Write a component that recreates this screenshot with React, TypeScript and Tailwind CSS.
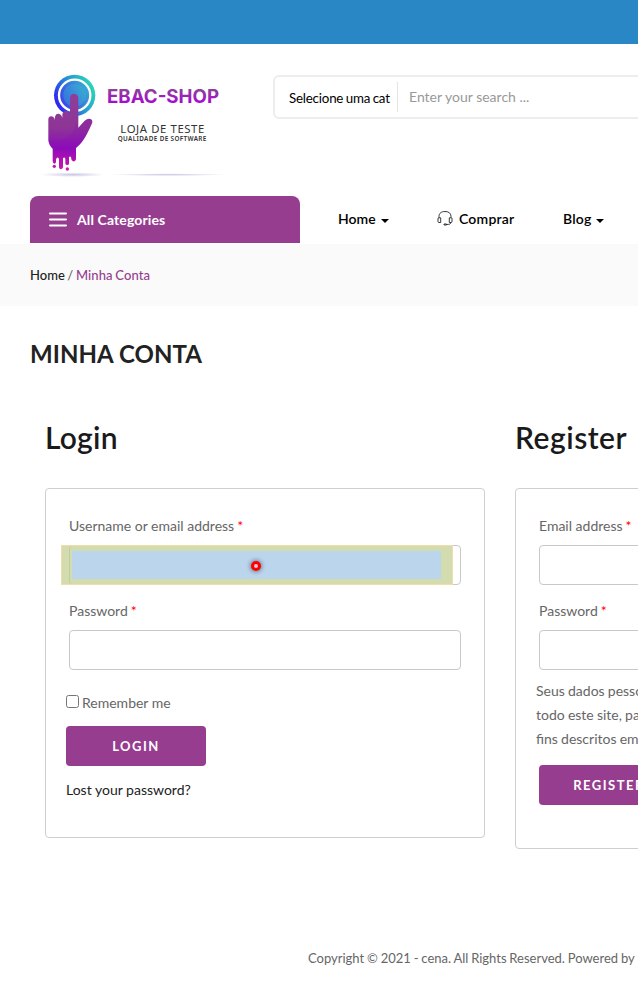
import type { ReactNode } from "react";

function Logo() {
  return (
    <svg className="block h-[130px] w-[210px] shrink-0" viewBox="0 0 630 390">
      <defs>
        <linearGradient id="ring" x1="0" y1="0.75" x2="1" y2="0.25">
          <stop offset="0" stopColor="#3410f5" />
          <stop offset="0.5" stopColor="#2590d8" />
          <stop offset="1" stopColor="#2adfb0" />
        </linearGradient>
        <linearGradient id="disc" x1="0" y1="0.8" x2="1" y2="0.2">
          <stop offset="0" stopColor="#3a3ce8" />
          <stop offset="1" stopColor="#38b4cf" />
        </linearGradient>
        <linearGradient id="hand" gradientUnits="userSpaceOnUse" x1="0" y1="100" x2="0" y2="330">
          <stop offset="0" stopColor="#8e3f9a" />
          <stop offset="0.45" stopColor="#8e3496" />
          <stop offset="0.72" stopColor="#8c0cba" />
          <stop offset="1" stopColor="#d414a8" />
        </linearGradient>
        <linearGradient id="word" gradientUnits="userSpaceOnUse" x1="0" y1="88" x2="0" y2="130">
          <stop offset="0" stopColor="#90409a" />
          <stop offset="1" stopColor="#a30ad2" />
        </linearGradient>
        <radialGradient id="shade">
          <stop offset="0" stopColor="#c9c6e4" />
          <stop offset="1" stopColor="#c9c6e4" stopOpacity="0" />
        </radialGradient>
      </defs>
      <ellipse cx="128" cy="344" rx="96" ry="7" fill="url(#shade)" />
      <ellipse cx="415" cy="344" rx="178" ry="4" fill="url(#shade)" />
      <circle cx="134" cy="106" r="62" fill="url(#ring)" />
      <circle cx="134" cy="106" r="47" fill="url(#disc)" stroke="#fff" strokeWidth="7" />
      <circle cx="134" cy="106" r="34" fill="#39c5d5" opacity="0.3" />
      <path
        fill="url(#hand)"
        d="M55 240V178Q55 169 64 169Q72 169 75 180V171Q77 160 86 161Q94 162 97 173V163Q100 153 109 153Q118 154 120 164V114Q121 101 132 101Q144 102 145 114V203Q153 195 160 187Q168 176 178 176Q190 178 186 190Q180 204 172 220Q157 250 138 264V298Q136 306 129 304Q123 302 123 292V291Q119 287 117 292V311Q116 315 112 315Q107 315 106 311V296Q103 289 99 295V322Q97 328 92 328Q87 327 87 321V298Q85 290 80 294Q77 297 78 306Q77 311 73 311Q68 310 68 304V266Q56 255 55 240Z"
      />
      <path d="M55 240Q95 248 120 226Q136 211 137 184L145 205Q152 196 160 187Q168 176 178 176Q190 178 186 190Q168 230 157 244Q132 276 68 266Q56 255 55 240Z" fill="#8c0cba" opacity="0.2" />
      <circle cx="73" cy="319" r="5" fill="#bd18b4" />
      <circle cx="112" cy="327" r="5" fill="#d414a8" />
      <text x="231" y="129" fontFamily="Inter, sans-serif" fontWeight="700" fontSize="56" textLength="336" lengthAdjust="spacingAndGlyphs" fill="url(#word)">EBAC-SHOP</text>
      <text x="271" y="219" fontFamily="'Noto Sans', sans-serif" fontSize="34" textLength="252" fill="#333">LOJA DE TESTE</text>
      <text x="263" y="242" fontFamily="'Noto Sans', sans-serif" fontWeight="600" fontSize="19" textLength="266" fill="#333">QUALIDADE DE SOFTWARE</text>
    </svg>
  );
}

function Caret() {
  return (
    <svg className="mt-[5px] h-1 w-2" viewBox="0 0 8 4">
      <path d="M0 0H8L4 4Z" fill="#000" />
    </svg>
  );
}

function Headset() {
  return (
    <svg className="mb-[2px] mr-[6px] h-4 w-4" viewBox="0 0 16 16" fill="none" stroke="#222" strokeWidth="0.9">
      <path d="M2 7.8V6.5C2 3 4.5 1.5 8 1.5S14 3 14 6.5V7.8M13.8 12.5C13.8 14 12.5 14.5 9.5 14.5" />
      <path d="M1 8.5Q1 7.8 2 7.8H3.7V12.5H2Q1 12.5 1 11.5ZM15 8.5Q15 7.8 14 7.8H12.3V12.5H14Q15 12.5 15 11.5Z" />
      <path d="M7 14H9.5V15H7Z" />
    </svg>
  );
}

function Field({ label, children }: { label: string; children?: ReactNode }) {
  return (
    <label className="mb-[14px] block px-[3px]">
      <span className="mb-[7px] block h-6 whitespace-nowrap leading-6">
        {label}<span className="ml-[3px] text-[#ff0000]">*</span>
      </span>
      <span className="relative block h-10 rounded-[4px] border border-[#c8c8c8] bg-white">{children}</span>
    </label>
  );
}

function InspectOverlay() {
  return (
    <span className="absolute -left-[9px] -top-px flex h-10 w-[392px] border border-[#f3dcac] bg-[#d2dcae] pb-[5px] pl-[10px] pr-[11px] pt-[5px]">
      <span className="absolute left-[7px] top-0 h-[38px] w-[3px] rounded-l-[3px] border-l border-[#c2cca1]" />
      <span className="flex flex-1 items-center justify-center bg-[#bbd5ed]">
        <span className="mr-px mt-px h-[10px] w-[10px] rounded-full border-[3px] border-[#ff0000] bg-[#ffc4d4] shadow-[0_0_4px_1px_rgba(0,0,0,0.4)]" />
      </span>
    </span>
  );
}

export default function App() {
  return (
    <div className="h-[1004px] w-full overflow-hidden bg-white font-['Lato',sans-serif] text-[14px] text-[#666]">
      <div className="h-11 bg-[#2a87c5]" />
      <header className="flex h-[152px] pl-[30px] pt-4">
        <Logo />
        <div className="ml-[33px] mt-[15px] flex h-11 w-[600px] shrink-0 items-center rounded-[6px] border-2 border-[#ededed]">
          <div className="flex h-[30px] w-[123px] items-center border-r border-[#e5e5e5] pl-[14px] pt-[3px] text-[13.33px] text-black">
            <span className="whitespace-nowrap tracking-[-0.2px] [word-spacing:-0.7px]">Selecione uma cat</span>
          </div>
          <span className="-mt-[2px] ml-[11px] text-[14px] text-[#999]">Enter your search ...</span>
        </div>
      </header>
      <nav className="flex h-12 pl-[30px]">
        <div className="flex h-[47px] w-[270px] shrink-0 items-center rounded-t-[8px] bg-[#963d8f] pl-[19px] font-bold text-white">
          <svg className="mr-[10px] h-[15px] w-[18px]" viewBox="0 0 18 15">
            <path d="M1 1.5H17M1 7.5H17M1 13.5H17" stroke="#fff" strokeWidth="2" strokeLinecap="round" />
          </svg>
          <span className="tracking-[0.12px]">All Categories</span>
        </div>
        <div className="flex h-[45px] shrink-0 items-center pl-[38px] font-semibold text-black">
          <span className="flex w-[99px] items-center gap-[5px]">Home <Caret /></span>
          <span className="flex w-[126px] items-center tracking-[0.2px]"><Headset />Comprar</span>
          <span className="flex items-center gap-[4px] tracking-[0.2px]">Blog <Caret /></span>
        </div>
      </nav>
      <div className="flex h-[62px] items-center bg-[#fafafa] pl-[30px] pt-px text-[13px] font-medium">
        <span className="whitespace-pre [word-spacing:-0.7px]"><span className="text-[#222]">Home</span> / <span className="tracking-[0.1px] text-[#963d8f]">Minha Conta</span></span>
      </div>
      <main className="pl-[30px]">
        <h1 className="pt-[33px] text-[24px] font-bold leading-[30px] tracking-[0.08px] text-[#222]">MINHA CONTA</h1>
        <div className="flex h-[557px] gap-[30px] pl-[15px] pt-[48px]">
          <section className="w-[440px] shrink-0">
            <h2 className="h-[70px] text-[30px] font-semibold leading-10 tracking-[0.25px] text-[#1a1a1a]">Login</h2>
            <form className="mt-px h-[350px] rounded-[4px] border border-[#cfcfcf] px-5 pt-[25px]">
              <Field label="Username or email address"><InspectOverlay /></Field>
              <Field label="Password" />
              <label className="mt-[21px] flex h-6 items-center leading-6">
                <input type="checkbox" className="mb-[3px] mr-[3px] h-[13px] w-[13px]" />
                Remember me
              </label>
              <button type="button" className="mt-[11px] block h-10 w-[140px] rounded-[4px] bg-[#963d8f] pt-[2px] text-[13px] font-bold tracking-[1.5px] text-white">LOGIN</button>
              <a className="mt-3 block leading-6 text-[#222]">Lost your password?</a>
            </form>
          </section>
          <section className="w-[440px] shrink-0">
            <h2 className="h-[70px] text-[30px] font-semibold leading-10 tracking-[0.5px] text-[#1a1a1a]">Register</h2>
            <form className="mt-px h-[361px] rounded-[4px] border border-[#cfcfcf] px-5 pt-[25px]">
              <Field label="Email address" />
              <Field label="Password" />
              <p className="-mt-[5px] whitespace-nowrap leading-6 [word-spacing:-0.4px]">
                Seus dados pessoais serão usados para aprimorar a sua experiência em<br />
                todo este site, para gerenciar o acesso a sua conta e para outros<br />
                fins descritos em nossa política de privacidade.
              </p>
              <button type="button" className="ml-[3px] mt-[14px] block h-10 w-[140px] rounded-[4px] bg-[#963d8f] pt-[2px] text-[13px] font-bold tracking-[1.5px] text-white">REGISTER</button>
            </form>
          </section>
        </div>
      </main>
      <footer className="whitespace-nowrap pl-[308px] pt-[20px] text-[13px] leading-6 text-[#666] [word-spacing:-0.5px]">Copyright © 2021 - cena. All Rights Reserved. Powered by</footer>
    </div>
  );
}
